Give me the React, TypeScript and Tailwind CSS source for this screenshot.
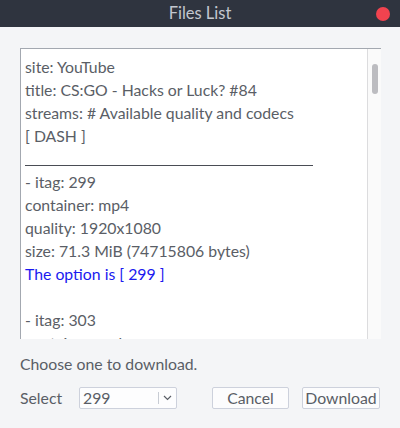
import React from "react";

const font = { fontFamily: "Lato, 'Noto Sans', sans-serif" };

const lines: { t: string; blue?: boolean }[] = [
  { t: "site: YouTube" },
  { t: "title: CS:GO - Hacks or Luck? #84" },
  { t: "streams: # Available quality and codecs" },
  { t: "[ DASH ]" },
  { t: "__UNDERLINE__" },
  { t: "- itag: 299" },
  { t: "container: mp4" },
  { t: "quality: 1920x1080" },
  { t: "size: 71.3 MiB (74715806 bytes)" },
  { t: "The option is [ 299 ]", blue: true },
  { t: "" },
  { t: "- itag: 303" },
  { t: "container: webm" },
];

export default function App() {
  return (
    <div
      className="w-[400px] h-[428px] bg-[#f4f5f7] flex flex-col text-[#5a5e66] text-[15.8px]"
      style={font}
    >
      <div className="h-[27px] bg-[#2f343f] grid grid-cols-[1fr_auto_1fr] items-center">
        <div />
        <div className="text-[16.5px] text-[#c3c7cf] leading-none pb-[1px]">Files List</div>
        <div className="flex justify-end pr-[10px]">
          <div className="w-[14px] h-[14px] rounded-full bg-[#f1434f]" />
        </div>
      </div>
      <div className="px-[20px] pt-[21px] flex flex-col">
        <div className="w-[361px] h-[291px] flex border-t border-[#a3a8b0] bg-white">
          <div className="flex-1 border-l border-[#a3a8b0] pl-[4px] pt-[6px] overflow-hidden">
            {lines.map((l, i) =>
              l.t === "__UNDERLINE__" ? (
                <div key={i} className="h-[23px] flex items-end pb-[4px]">
                  <div className="w-[288px] h-[1px] bg-[#4a4d55]" />
                </div>
              ) : (
                <div
                  key={i}
                  className={`h-[23px] leading-[23px] whitespace-nowrap ${l.blue ? "text-[#1a1af0]" : ""}`}
                >
                  {l.t}
                </div>
              )
            )}
          </div>
          <div className="w-[14px] border-l border-[#dcdcde] bg-[#fafafa] flex justify-center pt-[15px]">
            <div className="w-[6px] h-[30px] rounded-full bg-[#bcbcc0]" />
          </div>
        </div>
        <div className="mt-[13px] h-[23px] leading-[23px]">Choose one to download.</div>
        <div className="mt-[12px] flex items-center h-[22px]">
          <div className="w-[59px]">Select</div>
          <div className="w-[98px] h-[22px] border border-[#cdd1dc] rounded-[2px] bg-[#fdfdfe] flex items-center">
            <div className="flex-1 pl-[3px] leading-none">299</div>
            <div className="w-[1px] h-[12px] bg-[#c8ccd4]" />
            <div className="w-[17px] flex justify-center">
              <svg width="9" height="6" viewBox="0 0 9 6">
                <path d="M1 1 L4.5 4.5 L8 1" fill="none" stroke="#5a5e66" strokeWidth="1.2" />
              </svg>
            </div>
          </div>
          <div className="w-[35px]" />
          <div className="w-[77px] h-[22px] border border-[#cdd1dc] rounded-[2px] bg-[#fcfcfd] flex items-center justify-center leading-none">
            Cancel
          </div>
          <div className="w-[13px]" />
          <div className="w-[78px] h-[22px] border border-[#cdd1dc] rounded-[2px] bg-[#fcfcfd] flex items-center justify-center leading-none">
            Download
          </div>
        </div>
      </div>
    </div>
  );
}
